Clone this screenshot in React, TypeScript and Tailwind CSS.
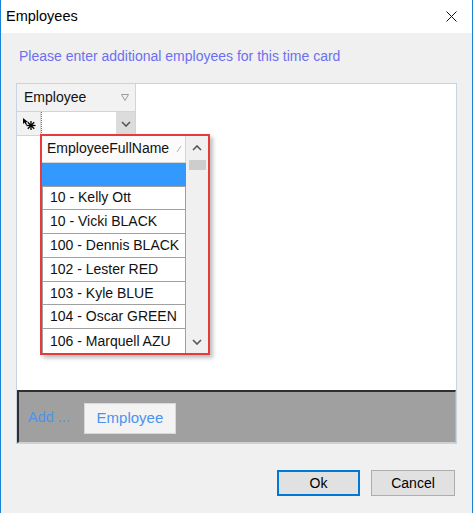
import React from "react";

const rows = [
  "10 - Kelly Ott",
  "10 - Vicki BLACK",
  "100 - Dennis BLACK",
  "102 - Lester RED",
  "103 - Kyle BLUE",
  "104 - Oscar GREEN",
  "106 - Marquell AZU",
];

function NewRowIcon() {
  return (
    <svg width="14" height="14" viewBox="0 0 14 14">
      <path d="M1 1 L1 7 L2.5 5.5 L4 8 L5 7.5 L4 5 L6 5 Z" fill="#000" />
      <g stroke="#000" strokeWidth="1.3">
        <line x1="9" y1="4" x2="9" y2="13" />
        <line x1="4.5" y1="8.5" x2="13.5" y2="8.5" />
        <line x1="5.8" y1="5.3" x2="12.2" y2="11.7" />
        <line x1="12.2" y1="5.3" x2="5.8" y2="11.7" />
      </g>
    </svg>
  );
}

function Chevron({ up = false }: { up?: boolean }) {
  return (
    <svg width="10" height="6" viewBox="0 0 10 6">
      <path
        d={up ? "M1 5 L5 1 L9 5" : "M1 1 L5 5 L9 1"}
        fill="none"
        stroke="#555"
        strokeWidth="1.6"
      />
    </svg>
  );
}

function EmployeeDropdown() {
  return (
    <div className="absolute left-[23px] top-[50px] flex h-[221px] w-[170px] border-2 border-[#e8393b] bg-white shadow-[3px_3px_4px_rgba(0,0,0,0.25)]">
      <div className="flex w-[144px] flex-col">
        <div className="flex h-[27px] items-center justify-between border-b border-r border-[#d6d6d6] bg-[#fbfbfb] pl-[5px] pr-[3px]">
          <span>EmployeeFullName</span>
          <svg width="6" height="8" viewBox="0 0 6 8">
            <line x1="1" y1="7" x2="5" y2="1" stroke="#b0b0b0" strokeWidth="1" />
          </svg>
        </div>
        <div className="h-[24px] border-b border-[#a0a0a0] bg-[#3399ff]" />
        {rows.map((r, i) => (
          <div
            key={r}
            className={`flex h-[24px] items-center border-x border-[#a0a0a0] pl-[7px] ${
              i < rows.length - 1 ? "border-b" : ""
            }`}
          >
            {r}
          </div>
        ))}
      </div>
      <div className="flex flex-1 flex-col items-center bg-[#f0f0f0]">
        <div className="flex h-[24px] w-full items-center justify-center">
          <Chevron up />
        </div>
        <div className="h-[10px] w-[17px] bg-[#cdcdcd]" />
        <div className="flex-1" />
        <div className="flex h-[22px] w-full items-center justify-center">
          <Chevron />
        </div>
      </div>
    </div>
  );
}

export default function App() {
  return (
    <div
      className="flex h-[513px] w-[473px] flex-col border-x border-[#1883d7] bg-[#f0f0f0] text-[14px] text-[#111]"
      style={{ fontFamily: '"Liberation Sans", Arial, sans-serif' }}
    >
      <div className="flex h-[33px] items-center justify-between bg-white pl-[5px] pr-[15px]">
        <span className="text-[14.5px] text-black">Employees</span>
        <svg width="11" height="11" viewBox="0 0 11 11">
          <path d="M0.5 0.5 L10.5 10.5 M10.5 0.5 L0.5 10.5" stroke="#111" strokeWidth="1" />
        </svg>
      </div>

      <div className="flex flex-1 flex-col px-[15px]">
        <p className="mt-[15px] pl-[3px] leading-[16px] text-[#6c6ff0]">
          Please enter additional employees for this time card
        </p>

        <div className="mt-[19px] flex h-[361px] w-[441px] flex-col border border-[#c9d3e2]">
          <div className="relative flex-1 bg-white">
            <div className="flex h-[28px] w-[119px] items-center justify-between border-b border-r border-[#d4d4d4] bg-[#f2f2f2] pl-[7px] pr-[6px]">
              <span>Employee</span>
              <svg width="8" height="7" viewBox="0 0 8 7">
                <path d="M0.5 0.5 L7.5 0.5 L4 6.5 Z" fill="none" stroke="#9a9a9a" strokeWidth="1" />
              </svg>
            </div>
            <div className="flex h-[24px] w-[119px] border-b border-r border-[#d4d4d4]">
              <div className="flex w-[24px] items-center justify-center border-r border-[#d4d4d4] bg-[#f2f2f2]">
                <NewRowIcon />
              </div>
              <div className="flex flex-1 border-l border-dotted border-[#3d7fd6]">
                <div className="flex-1" />
                <div className="flex w-[19px] items-center justify-center bg-[#dcdcdc]">
                  <Chevron />
                </div>
              </div>
            </div>
            <EmployeeDropdown />
          </div>

          <div className="flex h-[53px] items-center border-b border-l-2 border-r border-t-2 border-b-[#cfcfcf] border-l-[#2f2f2f] border-r-[#b5b5b5] border-t-[#2f2f2f] bg-[#a0a0a0] pl-[9px] pt-[2px]">
            <span className="text-[14.5px] text-[#4b93ee]">Add ...</span>
            <button className="ml-[14px] h-[31px] w-[92px] border border-[#d8d8d8] bg-[#f3f3f3] text-[15px] text-[#4b93ee]">
              Employee
            </button>
          </div>
        </div>

        <div className="mt-[26px] flex justify-end gap-[11px] pr-[2px]">
          <button className="h-[26px] w-[83px] border-2 border-[#0078d7] bg-[#e1e1e1] text-black">Ok</button>
          <button className="h-[26px] w-[84px] border border-[#adadad] bg-[#e1e1e1] text-black">Cancel</button>
        </div>
      </div>
    </div>
  );
}
